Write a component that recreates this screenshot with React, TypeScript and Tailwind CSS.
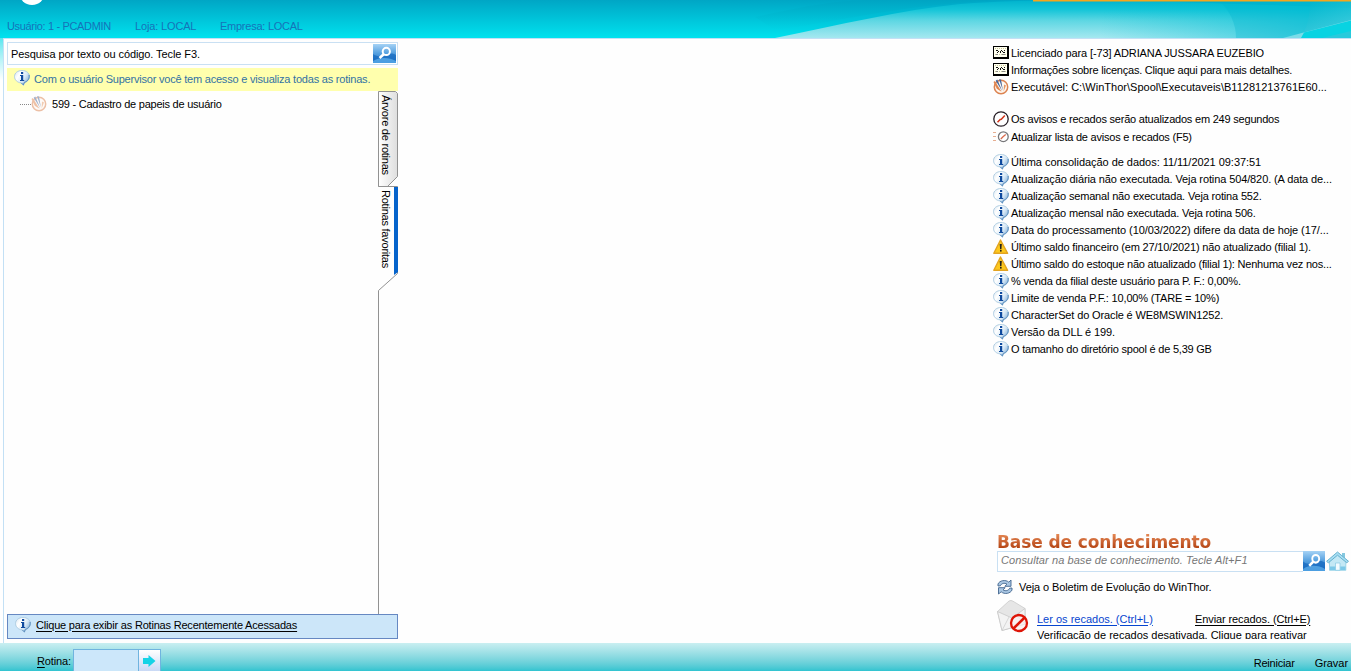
import React from 'react';
import { twMerge } from 'tailwind-merge';

type IconName = 'license' | 'logo' | 'gauge' | 'refreshList' | 'info' | 'warning';

interface NoticeItem {
    icon: IconName;
    text: string;
    tracking?: string;
    row?: string;
}

const InfoIcon: React.FC = () => (
    <svg width="16" height="16" viewBox="0 0 16 16" className="block shrink-0">
        <defs>
            <linearGradient id="balloon" x1="0" y1="0" x2="1" y2="0.6">
                <stop offset="0" stopColor="#d5e4ef" />
                <stop offset="0.35" stopColor="#ffffff" />
                <stop offset="0.7" stopColor="#d8e9f6" />
                <stop offset="1" stopColor="#8db6dc" />
            </linearGradient>
        </defs>
        <path
            d="M8 .5C12.300 .5 15.500 3 15.500 6.500C15.500 9.800 13 12 10.500 12.700L9.500 15.500L6.800 12.900C3.300 12.400 .5 9.900 .5 6.500C.5 3 3.800 .5 8 .5Z"
            fill="url(#balloon)"
            stroke="#a9c9e0"
            strokeWidth="0.900"
        />
        <path d="M15.100 5C15.700 8.500 13.700 11.400 10.400 12.300L9.300 14.800L7.300 12.800" fill="none" stroke="#5488bb" strokeWidth="1" />
        <rect x="7" y="2" width="2.200" height="2" fill="#0f4a9e" />
        <path d="M6 5H9.200V10H10.200V11H6V10H7V6H6Z" fill="#0f4a9e" />
    </svg>
);

const WarningIcon: React.FC = () => (
    <svg width="16" height="16" viewBox="0 0 16 16" className="block shrink-0">
        <path d="M7.500 1L14.600 14.300H.8Z" fill="#fdc81c" stroke="#e3a421" strokeWidth="1.400" strokeLinejoin="round" />
        <path d="M6.700 5H8.800L8.400 10.200H7.100Z" fill="#26221a" />
        <rect x="7" y="11" width="1.600" height="1.600" fill="#26221a" />
    </svg>
);

const LicenseIcon: React.FC = () => (
    <svg width="16" height="13" viewBox="0 0 16 13" className="block shrink-0" shapeRendering="crispEdges">
        <rect width="16" height="13" fill="#000" />
        <rect x="1" y="1" width="13" height="10" fill="#fffff0" />
        <path d="M2 2.500H13M2 8.500H13" stroke="#c8c89c" strokeDasharray="1 1" />
        <path d="M3 4.500H5M5 5.500H6M7 5.500H8M8 4.500H9M9 5.500H10M11 4.500H12M4 6.500H5M7 6.500H8M10 6.500H12" stroke="#111" />
        <path d="M3 8.500H5M9 8.500H12" stroke="#888" />
    </svg>
);

const LogoIcon: React.FC<{ className?: string }> = ({ className }) => (
    <svg width="16" height="16" viewBox="0 0 16 16" className={twMerge('block shrink-0', className)}>
        <circle cx="8" cy="8" r="6.700" fill="#fff8f1" stroke="#dc8350" strokeWidth="1.500" />
        <path d="M.5 3L1.800 2L8.500 12.800L3.800 9.800Z" fill="#e08650" />
        <path d="M2.700 1.800L4.300 .6L9.300 12.300Z" fill="#48689d" />
        <path d="M6 .3L8 .5L9.900 11.300Z" fill="#48689d" />
        <path d="M11 5.500L13 6.500L10.600 12.500Z" fill="#e59a68" />
    </svg>
);

const GaugeIcon: React.FC = () => (
    <svg width="16" height="16" viewBox="0 0 16 16" className="block shrink-0">
        <circle cx="8" cy="8" r="7.200" fill="#fff" stroke="#282028" strokeWidth="1.300" />
        <path d="M4.500 11.300L7.200 8.400L8.300 8.200L11.800 4.500" fill="none" stroke="#d0361c" strokeWidth="1.500" />
    </svg>
);

const RefreshListIcon: React.FC = () => (
    <svg width="16" height="12" viewBox="0 0 16 12" className="block shrink-0">
        <path d="M0 1.500H4M0 5.500H3M0 9.500H4" stroke="#e7ae91" strokeDasharray="3 1" />
        <circle cx="10.300" cy="5.700" r="4.900" fill="#fff" stroke="#77777a" strokeWidth="1.300" />
        <path d="M7.800 8L10 5.800L12.700 3.600" fill="none" stroke="#d96a4c" strokeWidth="1.300" />
    </svg>
);

const icons: Record<IconName, React.ReactNode> = {
    license: <LicenseIcon />,
    logo: <LogoIcon />,
    gauge: <GaugeIcon />,
    refreshList: <RefreshListIcon />,
    info: <InfoIcon />,
    warning: <WarningIcon />,
};

const SearchButton: React.FC<{ className?: string; id: string }> = ({ className, id }) => (
    <button type="button" className={twMerge('h-[19px] w-[23px] shrink-0', className)} aria-label="Pesquisar">
        <svg width="100%" height="100%" viewBox="0 0 23 19" preserveAspectRatio="none" className="block">
            <defs>
                <linearGradient id={id} x1="0" y1="0" x2="0" y2="1">
                    <stop offset="0" stopColor="#a5d2f5" />
                    <stop offset="0.5" stopColor="#549fdf" />
                    <stop offset="1" stopColor="#1f74c8" />
                </linearGradient>
            </defs>
            <rect width="23" height="19" fill={`url(#${id})`} />
            <path d="M0 10C4 13 8 12 12 11C17 9 20 9 23 11V19H0Z" fill="#1467bd" opacity=".7" />
            <path d="M0 17C6 13 16 13 23 17V19H0Z" fill="#62b4ee" opacity=".7" />
            <circle cx="13.300" cy="7.400" r="3.600" fill="none" stroke="#fff" strokeWidth="2" />
            <path d="M10.700 10.200L6.500 14" stroke="#fff" strokeWidth="2.600" />
        </svg>
    </button>
);

const HomeIcon: React.FC = () => (
    <svg width="23" height="20" viewBox="0 0 23 20" className="block shrink-0">
        <path d="M3.500 10.500L11.500 3.500L19.800 10.500V19.300H3.500Z" fill="#c3e8f5" stroke="#8bcde5" strokeWidth="0.800" />
        <path d="M16 2H19V7H16Z" fill="#86c8df" />
        <path d="M11.500 1L.6 10.300L2.300 11.800L11.500 4.200L20.800 11.800L22.500 10.300Z" fill="#a8def2" stroke="#5daccb" strokeWidth="0.900" />
        <path d="M9.500 12H14V19.300H9.500Z" fill="#f2fbff" stroke="#86c8e4" strokeWidth="0.700" />
        <path d="M4 15.500H9.300V19H4ZM14.300 15.500H19.500V19H14.300Z" fill="#7cc8e8" />
    </svg>
);

const SyncIcon: React.FC = () => (
    <svg width="16" height="16" viewBox="0 0 16 16" className="block shrink-0">
        <path
            d="M1 7V5C2.500 1.500 8.500 .2 11.800 3.200L14 1V7.300H7.800L10 5.200C7.500 3.500 4.500 4.300 3.300 6.800Z"
            fill="#a9c6e2"
            stroke="#42658f"
            strokeWidth="0.900"
        />
        <path
            d="M15 9V11C13.500 14.500 7.500 15.800 4.200 12.800L1.500 15V8.700H8.200L6 10.800C8.500 12.500 11.500 11.700 12.700 9.200Z"
            fill="#a9c6e2"
            stroke="#42658f"
            strokeWidth="0.900"
        />
    </svg>
);

const BlockedMailIcon: React.FC = () => (
    <svg width="32" height="33" viewBox="0 0 32 33" className="block shrink-0">
        <path d="M.5 11.500L12 1Q14 -.2 16 1.200L28 8.500V24L5 30.500Z" fill="#e6e6e6" stroke="#cacaca" strokeWidth="0.800" />
        <path d="M.5 11.500L15 18L28 8.500V24L5 30.500Z" fill="#f3f3f3" stroke="#c8c8c8" strokeWidth="0.800" />
        <path d="M5 30.500L12 17M28 24L19 15" stroke="#cfcfcf" strokeWidth="0.800" />
        <circle cx="22" cy="23" r="8" fill="#fbeeee" fillOpacity=".7" stroke="#de1508" strokeWidth="2.300" />
        <path d="M16.500 28.500L27.700 17.500" stroke="#de1508" strokeWidth="2.500" />
    </svg>
);

const notices: NoticeItem[] = [
    { icon: 'license', text: 'Licenciado para [-73] ADRIANA JUSSARA EUZEBIO', tracking: 'tracking-[-0.11px]' },
    { icon: 'license', text: 'Informações sobre licenças. Clique aqui para mais detalhes.', tracking: 'tracking-[-0.22px]' },
    { icon: 'logo', text: 'Executável: C:\\WinThor\\Spool\\Executaveis\\B11281213761E60...', tracking: 'tracking-[0.02px]' },
    { icon: 'gauge', text: 'Os avisos e recados serão atualizados em 249 segundos', tracking: 'tracking-[-0.21px]', row: 'mt-[15px]' },
    { icon: 'refreshList', text: 'Atualizar lista de avisos e recados (F5)', tracking: 'tracking-[-0.22px]', row: 'mt-px' },
    { icon: 'info', text: 'Última consolidação de dados: 11/11/2021 09:37:51', tracking: 'tracking-[-0.04px]', row: 'mt-2' },
    { icon: 'info', text: 'Atualização diária não executada. Veja rotina 504/820. (A data de...', tracking: 'tracking-[-0.11px]' },
    { icon: 'info', text: 'Atualização semanal não executada. Veja rotina 552.' },
    { icon: 'info', text: 'Atualização mensal não executada. Veja rotina 506.' },
    { icon: 'info', text: 'Data do processamento (10/03/2022) difere da data de hoje (17/...', tracking: 'tracking-[-0.08px]' },
    { icon: 'warning', text: 'Último saldo financeiro (em 27/10/2021) não atualizado (filial 1).' },
    { icon: 'warning', text: 'Último saldo do estoque não atualizado (filial 1): Nenhuma vez nos...', tracking: 'tracking-[-0.21px]' },
    { icon: 'info', text: '% venda da filial deste usuário para P. F.: 0,00%.' },
    { icon: 'info', text: 'Limite de venda P.F.: 10,00% (TARE = 10%)' },
    { icon: 'info', text: 'CharacterSet do Oracle é WE8MSWIN1252.', tracking: 'tracking-[-0.13px]' },
    { icon: 'info', text: 'Versão da DLL é 199.', tracking: 'tracking-[-0.1px]' },
    { icon: 'info', text: 'O tamanho do diretório spool é de 5,39 GB', tracking: 'tracking-[-0.22px]' },
];

const Notice: React.FC<{ item: NoticeItem }> = ({ item }) => (
    <li className={twMerge('flex h-[17px] items-center gap-[2px] whitespace-nowrap', item.row)}>
        {icons[item.icon]}
        <span className={twMerge('pt-px tracking-[-0.17px]', item.tracking)}>{item.text}</span>
    </li>
);

const Header: React.FC = () => (
    <header className="relative h-[38px] shrink-0 overflow-hidden bg-linear-to-b from-[#00a6c5] to-[#00e2ee]">
        <svg width="1351" height="38" viewBox="0 0 1351 38" className="absolute inset-0">
            <defs>
                <linearGradient id="wave" gradientUnits="userSpaceOnUse" x1="0" y1="0" x2="0" y2="38">
                    <stop offset="0" stopColor="#00b2cd" />
                    <stop offset="0.25" stopColor="#14c5d8" />
                    <stop offset="0.55" stopColor="#5fd7e3" />
                    <stop offset="1" stopColor="#a5e8f0" />
                </linearGradient>
                <linearGradient id="shade" x1="0" y1="0" x2="0" y2="1">
                    <stop offset="0" stopColor="#00a4c3" />
                    <stop offset="1" stopColor="#00cbdc" stopOpacity="0" />
                </linearGradient>
                <linearGradient id="edge" gradientUnits="userSpaceOnUse" x1="1100" y1="0" x2="1310" y2="0">
                    <stop offset="0" stopColor="#00c0d6" stopOpacity="0" />
                    <stop offset="1" stopColor="#00c0d6" />
                </linearGradient>
                <linearGradient id="corner" gradientUnits="userSpaceOnUse" x1="1310" y1="0" x2="1325" y2="36">
                    <stop offset="0" stopColor="#00b4cc" />
                    <stop offset="1" stopColor="#48cfdf" />
                </linearGradient>
            </defs>
            <path d="M775 38C840 25 900 10 960 4C1060 -4 1180 2 1351 8V38Z" fill="url(#wave)" />
            <path d="M755 17C810 5 840 0 870 0H1040C930 -2 850 20 775 30Z" fill="url(#shade)" />
            <path d="M1080 0H1351V38H1080Z" fill="url(#edge)" opacity=".6" />
            <path d="M1218 0C1230 10 1236 24 1236 38H1351V0Z" fill="#00b4cd" opacity=".3" />
            <path d="M1310 0C1310 14 1308 25 1303 34L1351 20V0Z" fill="url(#corner)" opacity=".6" />
            <path d="M1283 38L1351 20V24L1301 38Z" fill="#7cdce8" />
            <path d="M1301 38L1304 32.500L1351 20.500V38Z" fill="#08d3e2" />
            <path d="M1322 38L1351 31V38Z" fill="#3ec4d8" opacity=".6" />
            <rect x="1033" width="318" height="1.500" fill="#f5a61d" />
            <circle cx="32" cy="-8" r="13" fill="#fff" />
        </svg>
        <div className="relative flex gap-6 pt-[19px] pl-[7px] leading-[14px] whitespace-nowrap text-[#1673b9]">
            <span className="w-[104px] tracking-[-0.34px]">Usuário: 1 - PCADMIN</span>
            <span className="w-[61px] tracking-[-0.15px]">Loja: LOCAL</span>
            <span className="tracking-[-0.25px]">Empresa: LOCAL</span>
        </div>
    </header>
);

const SideTabs: React.FC = () => (
    <div className="relative h-full w-5 shrink-0">
        <svg width="20" height="523" viewBox="0 0 20 523" className="absolute inset-0">
            <defs>
                <linearGradient id="tab">
                    <stop offset="0" stopColor="#ffffff" />
                    <stop offset="1" stopColor="#dedede" />
                </linearGradient>
            </defs>
            <path d="M.5 .5H17.500L19.500 2.500V85.500L9.500 95.500H.5Z" fill="url(#tab)" stroke="#929292" />
            <path d="M.5 95.500H19.500V182.500L.5 199.500V523" fill="none" stroke="#929292" />
            <path d="M16 96H20V181L16 184Z" fill="#0563cb" />
        </svg>
        <div className="relative flex flex-col items-start gap-4 pt-1 leading-[15px] tracking-[-0.23px]">
            <span className="h-[79px] w-[15px] whitespace-nowrap [writing-mode:vertical-rl]">Árvore de rotinas</span>
            <span className="h-[79px] w-[15px] whitespace-nowrap [writing-mode:vertical-rl]">Rotinas favoritas</span>
        </div>
    </div>
);

const RoutinePanel: React.FC = () => (
    <section className="flex w-[391px] shrink-0 flex-col pt-[3px]">
        <div className="flex h-[23px] items-center border border-[#c9e0f3] bg-white pr-px pl-[3px]">
            <span className="flex-1 pt-px tracking-[-0.09px] whitespace-nowrap">Pesquisa por texto ou código. Tecle F3.</span>
            <SearchButton id="search-main" />
        </div>
        <div className="mt-[3px] flex h-[23px] items-center gap-1 bg-[#ffffad] pl-[7px] text-[#3272a4]">
            <div className="pb-[3px]">
                <InfoIcon />
            </div>
            <span className="tracking-[-0.21px] whitespace-nowrap">
                Com o usuário Supervisor você tem acesso e visualiza todas as rotinas.
            </span>
        </div>
        <div className="flex h-[523px]">
            <div className="flex flex-1 items-start pt-[5px] pl-[13px]">
                <div className="flex h-4 items-center">
                    <span className="w-[11px] border-t border-dotted border-[#888]" />
                    <LogoIcon className="opacity-50" />
                    <span className="pl-[5px] tracking-[-0.24px] whitespace-nowrap">599 - Cadastro de papeis de usuário</span>
                </div>
            </div>
            <SideTabs />
        </div>
        <div className="flex h-[25px] items-center gap-[5px] border border-[#6688c2] bg-[#cce6f9] pb-[3px] pl-[7px]">
            <InfoIcon />
            <a className="tracking-[-0.2px] whitespace-nowrap underline underline-offset-2">
                Clique para exibir as Rotinas Recentemente Acessadas
            </a>
        </div>
    </section>
);

const KnowledgeBase: React.FC = () => (
    <div className="flex flex-col pb-1 pl-1">
        <h2 className="h-[21px] w-[230px] bg-linear-to-b from-[#e48753] from-20% to-[#b54411] to-85% bg-clip-text font-['DejaVu_Sans'] text-[17px] leading-[24px] font-bold tracking-[-0.1px] whitespace-nowrap text-transparent">
            Base de conhecimento
        </h2>
        <div className="flex h-[21px]">
            <div className="flex w-[306px] items-start border border-r-0 border-[#c9e0f3] bg-white pt-px pl-[3px] leading-[15px] text-[#777] italic">
                <span className="tracking-[0.08px] whitespace-nowrap">Consultar na base de conhecimento. Tecle Alt+F1</span>
            </div>
            <SearchButton id="search-base" className="h-5 w-[22px]" />
            <div className="pl-px">
                <HomeIcon />
            </div>
        </div>
        <div className="mt-[7px] flex h-4 items-center gap-[6px]">
            <SyncIcon />
            <span className="tracking-[-0.1px] whitespace-nowrap">Veja o Boletim de Evolução do WinThor.</span>
        </div>
        <div className="mt-[5px] flex h-[39px] gap-2 overflow-hidden">
            <BlockedMailIcon />
            <div className="flex flex-col pt-[11px]">
                <div className="flex h-4 items-center gap-[42px] whitespace-nowrap">
                    <a className="w-[116px] text-[#0645cf] underline underline-offset-2">Ler os recados. (Ctrl+L)</a>
                    <a className="tracking-[-0.1px] underline underline-offset-2">Enviar recados. (Ctrl+E)</a>
                </div>
                <span className="block h-3 overflow-hidden leading-4 whitespace-nowrap">
                    Verificação de recados desativada. Clique para reativar
                </span>
            </div>
        </div>
    </div>
);

const Footer: React.FC = () => (
    <footer className="flex h-7 shrink-0 overflow-hidden bg-linear-to-b from-[#c9eff1] to-[#2fc4d0] pl-[37px]">
        <label className="w-[36px] pt-[11px] leading-[14px] tracking-[-0.15px]">
            <span className="underline underline-offset-2">R</span>otina:
        </label>
        <div className="mt-1.5 flex h-[22px] border border-b-0 border-[#70b4df]">
            <div className="w-16 bg-[#cce7fa]" />
            <button type="button" className="w-[22px] border-l border-[#70b4df] bg-linear-to-b from-white to-[#c9d9f5]" aria-label="Ir">
                <svg width="21" height="20" viewBox="0 0 21 20" className="block">
                    <path d="M4 7H9.500V4L16.500 10L9.500 16V13H4Z" fill="#16d3e6" />
                </svg>
            </button>
        </div>
        <div className="ml-auto flex gap-5 pt-[13px] pr-[3px] leading-[14px]">
            <span className="tracking-[-0.2px]">Reiniciar</span>
            <span className="tracking-[-0.05px]">Gravar</span>
        </div>
    </footer>
);

const App: React.FC = () => (
    <div className="flex h-[671px] w-[1351px] flex-col overflow-hidden bg-white font-['Liberation_Sans',Arial,sans-serif] text-[11px] leading-[15px] text-black">
        <Header />
        <div className="flex h-[605px] shrink-0 bg-linear-to-b from-[#54e6ef] via-white via-7% to-white pl-[3px]">
            <main className="flex flex-1 justify-between border-t border-l border-[#c3e0f5] bg-[#fefefe] pl-[3px]">
                <RoutinePanel />
                <aside className="flex w-[358px] shrink-0 flex-col justify-between pt-[5px]">
                    <ul>
                        {notices.map((item) => (
                            <Notice key={item.text} item={item} />
                        ))}
                    </ul>
                    <KnowledgeBase />
                </aside>
            </main>
        </div>
        <Footer />
    </div>
);

export default App;
